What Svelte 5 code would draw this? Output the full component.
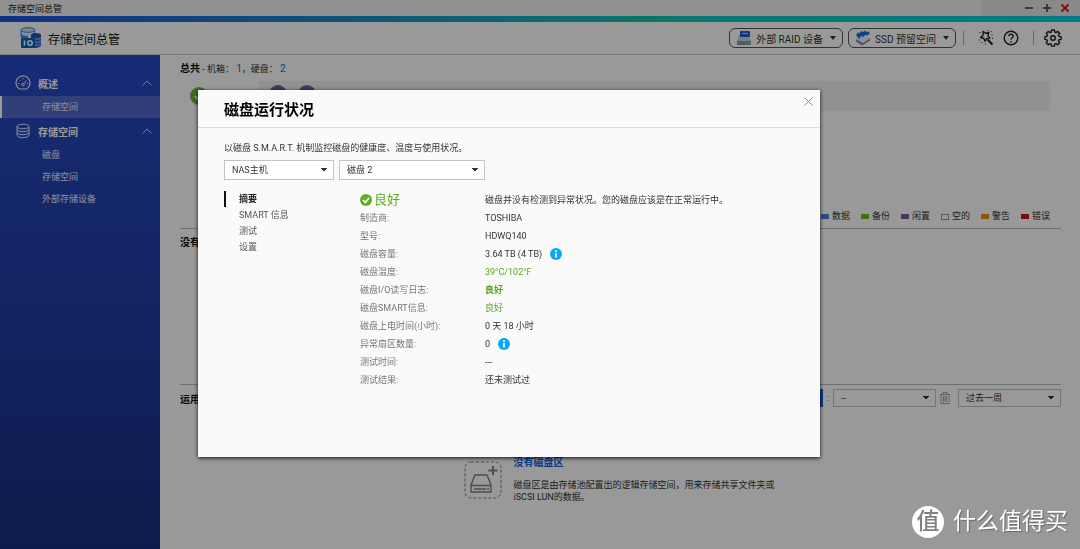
<script lang="ts">
	const nav = [
		{ title: "概述", icon: "gauge", items: ["存储空间"] },
		{ title: "存储空间", icon: "disks", items: ["磁盘", "存储空间", "外部存储设备"] },
	];

	const legend = [
		{ label: "数据", color: "#3f7fe8" },
		{ label: "备份", color: "#6fbf0c" },
		{ label: "闲置", color: "#7a5c94" },
		{ label: "空的", color: "" },
		{ label: "警告", color: "#f08a1c" },
		{ label: "错误", color: "#d0101c" },
	];

	const tabs = ["摘要", "SMART 信息", "测试", "设置"];

	const rows = [
		{ label: "制造商:", value: "TOSHIBA" },
		{ label: "型号:", value: "HDWQ140" },
		{ label: "磁盘容量:", value: "3.64 TB (4 TB)", info: true },
		{ label: "磁盘温度:", value: "39°C/102°F", good: true },
		{ label: "磁盘I/O读写日志:", value: "良好", good: true, bold: true },
		{ label: "磁盘SMART信息:", value: "良好", good: true },
		{ label: "磁盘上电时间(小时):", value: "0 天 18 小时" },
		{ label: "异常扇区数量:", value: "0", info: true },
		{ label: "测试时间:", value: "---" },
		{ label: "测试结果:", value: "还未测试过" },
	];

	let open = $state(true);
	let tab = $state("摘要");
	let host = $state("NAS主机");
	let disk = $state("磁盘 2");
	let period = $state("过去一周");
</script>

<div class="app">
	<div class="titlebar">
		<span>存储空间总管</span>
		<div class="titlebar__buttons">
			<button aria-label="最小化">
				<svg width="10" height="10" viewBox="0 0 10 10"><path d="M1 5h8" stroke="#5a606c" stroke-width="2" /></svg>
			</button>
			<button aria-label="最大化">
				<svg width="10" height="10" viewBox="0 0 10 10"><path d="M1 5h8M5 1v8" stroke="#5a606c" stroke-width="2" /></svg>
			</button>
			<button aria-label="关闭窗口">
				<svg width="10" height="10" viewBox="0 0 10 10"><path d="M1.500 1.500l7 7m0-7l-7 7" stroke="#e0141e" stroke-width="2" /></svg>
			</button>
		</div>
	</div>
	<div class="strip"></div>

	<header class="header">
		<svg class="header__logo" width="22" height="22" viewBox="0 0 22 22">
			<path d="M1 3v7h14V3z" fill="#e4effc" />
			<path d="M1 3v7M14.500 3v4" stroke="#3d8ee8" />
			<ellipse cx="8" cy="3" rx="7" ry="2.300" fill="#cfe3fb" stroke="#2f7fe0" />
			<path d="M1 6q1 3 7 3v3H1z" fill="#3d90ee" />
			<path d="M11 8h10v11q-2 2-6 2l-4-1z" fill="#2b5fd0" />
			<ellipse cx="16" cy="8" rx="5" ry="2" fill="#2050b8" />
			<path d="M14 12q5 1 7-1M14 15q5 1 7-1M14 18q5 1 7-1" fill="none" stroke="#9cc2f5" />
			<rect x="1" y="11" width="14" height="10" rx="1" fill="#0d62b8" />
			<path d="M4.500 13.500v5" stroke="#fff" stroke-width="1.600" />
			<circle cx="10" cy="16" r="2.200" fill="none" stroke="#fff" stroke-width="1.500" />
		</svg>
		<h1>存储空间总管</h1>
		<div class="header__tools">
			<button class="pill">
				<svg width="16" height="16" viewBox="0 0 16 16">
					<path d="M3 5L1 11h14l-2-6z" fill="#c9d3de" />
					<rect x="1" y="11" width="14" height="4" fill="#8a99a8" />
					<path d="M11 13h3" stroke="#5fd44a" />
					<rect x="4" y="1" width="10" height="6" rx="1" fill="#1f5fc8" />
					<path d="M6 3.500h6" stroke="#b9d4fa" />
				</svg>
				外部 RAID 设备
				<svg class="caret" width="6" height="4" viewBox="0 0 6 4"><path d="M0 0h6L3 4z" fill="currentColor" /></svg>
			</button>
			<button class="pill pill--ssd">
				<svg width="16" height="16" viewBox="0 0 16 16">
					<path d="M1 9l7 4 7-5v2.500L7 15.500l-6-4z" fill="#7f90a6" />
					<path d="M1 8.500L8 5l7 3-7 5z" fill="#e8f1fb" />
					<path d="M1 5l2-2.500 2 .5 1-2 2.500 1L10 .5l2 1.500 2.500-.5V4L12 5.500 10 5 8.500 7 6 6 4 9 2.500 7z" fill="#1a72e0" />
				</svg>
				SSD 预留空间
				<svg class="caret" width="6" height="4" viewBox="0 0 6 4"><path d="M0 0h6L3 4z" fill="currentColor" /></svg>
			</button>
			<i class="divider"></i>
			<button class="tool" aria-label="向导">
				<svg width="16" height="16" viewBox="0 0 16 16" fill="none" stroke="#222">
					<path d="M5.200 1.500L7.800 3.400l3-.9-.8 3.100 1.900 2.500-3.100.3L7 11.200 5.700 8.300l-3.200-.8 2.500-2z" stroke-width="1.400" stroke-linejoin="round" />
					<path d="M9.500 9.500l5 5" stroke-width="2.200" />
					<path d="M1.500 2.500h1M.8 10h1M3.500 12.500h1M7 14h1M12.500 1.500h1M13.500 5h1M14 8.500h1M9.500.6h1" />
				</svg>
			</button>
			<button class="tool" aria-label="帮助">
				<svg width="16" height="16" viewBox="0 0 16 16" fill="none" stroke="#222" stroke-width="1.400">
					<circle cx="8" cy="8" r="6.800" />
					<path d="M5.800 6.300Q5.900 4.300 8 4.300t2.200 1.900Q10.200 7.300 8.900 8 8 8.500 8 9.700" />
					<path d="M8 11v1.500" />
				</svg>
			</button>
			<i class="divider"></i>
			<button class="tool" aria-label="设置">
				<svg width="18" height="18" viewBox="0 0 18 18" fill="none" stroke="#222" stroke-width="1.400" stroke-linejoin="round">
					<path d="M7.600 1h2.800l.4 2.100 1.200.5 1.800-1.200 2 2-1.300 1.800.5 1.200 2 .3v2.700l-2 .4-.5 1.200 1.200 1.800-2 2-1.800-1.200-1.200.5-.3 2H7.600l-.4-2-1.200-.5-1.800 1.200-2-2L3.400 12l-.5-1.200-2-.4V7.700l2-.3.5-1.200-1.200-1.800 2-2L6 3.600l1.200-.5z" />
					<circle cx="9" cy="9" r="2.300" />
				</svg>
			</button>
		</div>
	</header>

	<div class="body">
		<nav class="side">
			{#each nav as group, g}
				<button class="side__group">
					{#if group.icon === "gauge"}
						<svg width="16" height="16" viewBox="0 0 16 16" fill="none" stroke="#e8edfb">
							<path d="M4.500 14A7 7 0 1 1 11.500 14z" stroke-width="1.200" />
							<circle cx="8" cy="9.500" r="1.300" />
							<path d="M9 8.500l2.500-3M3 8.500h1.300M4.500 4.800l.8.800M8 3v1.400M12 8.500h1.200" />
						</svg>
					{:else}
						<svg width="16" height="16" viewBox="0 0 16 16" fill="none" stroke="#e8edfb">
							<ellipse cx="8" cy="3.500" rx="6" ry="2.300" />
							<path d="M2 3.500v9M14 3.500v9M2 6.500q1 2.300 6 2.300t6-2.300M2 9.500q1 2.300 6 2.300t6-2.300M2 12.500q1 2.300 6 2.300t6-2.300" />
						</svg>
					{/if}
					{group.title}
					<svg class="side__arrow" width="10" height="6" viewBox="0 0 10 6"><path d="M.5 5.500L5 1l4.500 4.500" fill="none" stroke="#c0cbee" /></svg>
				</button>
				{#each group.items as item, i}
					<a class="side__item" class:side__item--on={g === 0 && i === 0} href="#{item}">{item}</a>
				{/each}
			{/each}
		</nav>

		<main class="main">
			<section class="overview">
				<p class="total"><b>总共</b> - 机箱： <a href="#enclosure">1</a>，硬盘： <a href="#disks">2</a></p>
				<div class="chassis">
					<svg width="18" height="18" viewBox="0 0 18 18">
						<circle cx="9" cy="9" r="9" fill="#65b52a" />
						<path d="M5 9l3 3.500L13 6" fill="none" stroke="#fff" stroke-width="2" />
					</svg>
					<div class="chassis__bays"><i></i><i></i></div>
				</div>
				<ul class="legend">
					{#each legend as l}
						<li><i style:background={l.color || "none"} class:empty={!l.color}></i>{l.label}</li>
					{/each}
				</ul>
			</section>

			<section class="pool"><h2>没有存储池</h2></section>

			<section class="usage">
				<div class="usage__bar">
					<h2>运用率</h2>
					<button class="usage__add">新增</button>
					<span>:</span>
					<select aria-label="对象"><option>--</option></select>
					<button class="trash" aria-label="删除">
						<svg width="10" height="12" viewBox="0 0 10 12" fill="none" stroke="#a0a0a0">
							<path d="M0 2.500h10M3 2V.5h4V2M1 2.500v9h8v-9M3.500 4v6M5 4v6M6.500 4v6" />
						</svg>
					</button>
					<select aria-label="时间范围" bind:value={period}><option>过去一周</option></select>
				</div>
				<div class="none">
					<svg width="38" height="38" viewBox="0 0 38 38" fill="none" stroke="#808080">
						<rect x="1" y="1" width="36" height="36" rx="6" stroke-dasharray="3 2" />
						<path d="M29 5v9M24.500 9.500h9" stroke-width="2" />
						<path d="M11 14h12l4 10v7H7v-7zM7 24.500h20M10 28h12M23 28h2" stroke-width="1.400" />
					</svg>
					<div>
						<a href="#volume">没有磁盘区</a>
						<p>磁盘区是由存储池配置出的逻辑存储空间，用来存储共享文件夹或iSCSI LUN的数据。</p>
					</div>
				</div>
			</section>
		</main>
	</div>

	{#if open}
		<div class="mask">
			<div class="dialog" role="dialog" aria-labelledby="dialog-title">
				<div class="dialog__head">
					<h2 id="dialog-title">磁盘运行状况</h2>
					<button aria-label="关闭" onclick={() => (open = false)}>
						<svg width="9" height="9" viewBox="0 0 9 9"><path d="M.5.5l8 8m0-8l-8 8" stroke="#8a8a8a" /></svg>
					</button>
				</div>
				<div class="dialog__body">
					<p>以磁盘 S.M.A.R.T. 机制监控磁盘的健康度、温度与使用状况。</p>
					<div class="selects">
						<select class="selects__host" aria-label="主机" bind:value={host}><option>NAS主机</option></select>
						<select class="selects__disk" aria-label="磁盘" bind:value={disk}><option>磁盘 1</option><option>磁盘 2</option></select>
					</div>
					<div class="detail">
						<div class="tabs">
							{#each tabs as t}
								<button class:on={tab === t} onclick={() => (tab = t)}>{t}</button>
							{/each}
						</div>
						<table>
							<tbody>
								<tr class="status">
									<th scope="row">
										<span>
											<svg width="12" height="12" viewBox="0 0 12 12">
												<circle cx="6" cy="6" r="6" fill="#62ad26" />
												<path d="M3 6l2.300 2.400L9 4" fill="none" stroke="#fff" stroke-width="1.700" />
											</svg>
											良好
										</span>
									</th>
									<td>磁盘并没有检测到异常状况。您的磁盘应该是在正常运行中。</td>
								</tr>
								{#each rows as r}
									<tr>
										<th scope="row">{r.label}</th>
										<td class:good={r.good} class:bold={r.bold}>
											<span>
												{r.value}
												{#if r.info}
													<svg width="12" height="12" viewBox="0 0 12 12">
														<circle cx="6" cy="6" r="6" fill="#0aa8f5" />
														<path d="M6 5v4.500M6 2.300v1.600" stroke="#fff" stroke-width="1.700" />
													</svg>
												{/if}
											</span>
										</td>
									</tr>
								{/each}
							</tbody>
						</table>
					</div>
				</div>
			</div>
		</div>
	{/if}

	<div class="mark"><b>值</b>什么值得买</div>
</div>

<style>
	:global(body) {
		font-family: Roboto, "Noto Sans CJK SC", sans-serif;
		font-size: 9px;
		color: #333;
	}

	button,
	select {
		font: inherit;
		color: inherit;
		padding: 0;
		border: 0;
		background: none;
	}

	button {
		cursor: pointer;
	}

	svg {
		display: block;
		flex-shrink: 0;
	}

	a {
		color: #1464e6;
		text-decoration: none;
	}

	h1,
	h2,
	p,
	ul {
		margin: 0;
		padding: 0;
	}

	select {
		height: 18px;
		padding: 0 20px 0 7px;
		border: 1px solid #c4c4c4;
		border-radius: 0;
		appearance: none;
		background: linear-gradient(to top right, transparent 50%, #333 50%) right 9px center / 3px 4px no-repeat,
			linear-gradient(to top left, transparent 50%, #333 50%) right 6px center / 3px 4px no-repeat;
	}

	.app {
		min-height: 100vh;
		display: flex;
		flex-direction: column;
		background: #fff;
	}

	.titlebar {
		height: 16px;
		padding: 0 10px 0 8px;
		display: flex;
		align-items: center;
		justify-content: space-between;
		background: linear-gradient(to right, #f2f2f2, #f0f0f0 calc(100% - 98px), #e4e4e4 calc(100% - 98px));
		color: #222;
	}

	.titlebar__buttons {
		display: flex;
		gap: 8px;
	}

	.strip {
		height: 6px;
		background: linear-gradient(to right, #1e50e0, #1c86c8 30%, #13c4b4 60%, #00cfe0);
	}

	.header {
		height: 32px;
		padding: 0 18px 0 20px;
		display: flex;
		align-items: center;
		border-bottom: 1px solid #ccc;
	}

	.header__logo {
		margin-right: 6px;
	}

	h1 {
		font-size: 12px;
		font-weight: 400;
		color: #111;
	}

	.header__tools {
		margin-left: auto;
		display: flex;
		align-items: center;
	}

	.pill {
		height: 20px;
		padding: 0 6px;
		display: flex;
		align-items: center;
		gap: 4px;
		border: 1px solid #555;
		border-radius: 6px;
		font-size: 10px;
	}

	.pill--ssd {
		margin-left: 5px;
	}

	.caret {
		margin-left: 3px;
	}

	.divider {
		width: 1px;
		height: 14px;
		margin: 0 14px 0 7px;
		background: #b0b0b0;
	}

	.tool + .tool {
		margin-left: 9px;
	}

	.tool + .divider {
		margin: 0 10px 0 14px;
	}

	.body {
		flex: 1;
		display: flex;
	}

	.side {
		width: 160px;
		flex-shrink: 0;
		box-sizing: border-box;
		padding-top: 15px;
		background: linear-gradient(#264ac4, #1e399c 60%, #16307f);
	}

	.side__group {
		width: 100%;
		height: 26px;
		padding: 0 8px 0 15px;
		display: flex;
		align-items: center;
		gap: 7px;
		font-size: 10px;
		font-weight: 700;
		color: #fff;
	}

	.side__arrow {
		margin-left: auto;
	}

	.side__item {
		display: block;
		padding-left: 42px;
		line-height: 22px;
		color: #e8edfb;
	}

	.side__item--on {
		padding-left: 40px;
		border-left: 2px solid #fff;
		background: #5069c8;
	}

	.main {
		flex: 1;
		min-width: 0;
		padding: 0 19px 0 20px;
	}

	.overview {
		height: 173px;
		display: flex;
		flex-direction: column;
		border-bottom: 1px solid #bbb;
	}

	.total {
		padding-top: 6px;
		line-height: 16px;
	}

	.total a {
		font-size: 10px;
	}

	.total b,
	.main h2 {
		font-size: 10px;
		font-weight: 700;
		color: #111;
	}

	.chassis {
		display: flex;
		align-items: center;
		gap: 51px;
		padding: 4px 11px 0 10px;
	}

	.chassis__bays {
		flex: 1;
		height: 26px;
		padding: 4px 10px 0;
		display: flex;
		gap: 11px;
		background: #f2f2f2;
	}

	.chassis__bays i {
		width: 18px;
		height: 18px;
		border-radius: 50%;
		background: #7a5c94;
	}

	.legend {
		margin-top: auto;
		padding: 0 11px 5px 0;
		display: flex;
		justify-content: flex-end;
		gap: 11px;
		list-style: none;
		line-height: 13px;
	}

	.legend li {
		display: flex;
		align-items: center;
		gap: 3px;
	}

	.legend i {
		width: 8px;
		height: 5px;
		box-sizing: border-box;
	}

	.legend .empty {
		height: 6px;
		border: 1px solid #999;
	}

	.pool {
		height: 150px;
		padding-top: 5px;
		border-bottom: 1px solid #bbb;
	}

	.usage__bar {
		padding-top: 4px;
		display: flex;
		align-items: center;
		gap: 4px;
	}

	.usage__add {
		margin-left: auto;
		width: 40px;
		height: 18px;
		background: #1a5fe0;
		color: #fff;
	}

	.usage__bar select {
		width: 103px;
	}

	.trash {
		margin-right: 4px;
	}

	.none {
		margin-top: 50px;
		display: flex;
		align-items: center;
		justify-content: center;
		gap: 12px;
	}

	.none div {
		width: 264px;
	}

	.none a {
		display: block;
		font-size: 10px;
		font-weight: 700;
		line-height: 12px;
	}

	.none p {
		margin-top: 10px;
		line-height: 12px;
	}

	.mask {
		position: fixed;
		inset: 0;
		display: flex;
		align-items: center;
		justify-content: center;
		padding: 0 62px 3px 0;
		background: rgba(0, 0, 0, 0.4);
	}

	.dialog {
		width: 100%;
		max-width: 622px;
		background: #fafafa;
		box-shadow: 0 1px 4px rgba(0, 0, 0, 0.9);
	}

	.dialog__head {
		height: 37px;
		padding: 0 7px 0 26px;
		display: flex;
		align-items: center;
		justify-content: space-between;
		border-bottom: 1px solid #ddd;
	}

	.dialog__head h2 {
		font-size: 15px;
		color: #000;
	}

	.dialog__head button {
		align-self: flex-start;
		margin-top: 7px;
	}

	.dialog__body {
		padding: 12px 26px 68px;
		line-height: 16px;
	}

	.selects {
		display: flex;
		gap: 5px;
		margin-top: 4px;
	}

	.selects select {
		height: 20px;
		background-color: #fff;
	}

	.selects__host {
		width: 110px;
	}

	.selects__disk {
		width: 146px;
	}

	.detail {
		display: flex;
		margin-top: 11px;
	}

	.tabs {
		width: 136px;
		display: flex;
		flex-direction: column;
	}

	.tabs button {
		line-height: 16px;
		padding-left: 15px;
		text-align: left;
		color: #555;
	}

	.tabs .on {
		padding-left: 13px;
		border-left: 2px solid #111;
		font-weight: 700;
		color: #222;
	}

	table {
		flex: 1;
		border-collapse: collapse;
	}

	th,
	td {
		height: 18px;
		padding: 0;
		text-align: left;
		font-weight: 400;
	}

	th {
		width: 125px;
		color: #777;
	}

	tr span {
		display: flex;
		align-items: center;
		gap: 8px;
	}

	.status th {
		font-size: 13px;
		color: #5db01e;
	}

	.status span {
		gap: 2px;
	}

	.good {
		color: #56a818;
	}

	.bold {
		font-weight: 700;
	}

	.mark {
		position: fixed;
		right: 12px;
		bottom: 11px;
		display: flex;
		align-items: center;
		gap: 9px;
		font-size: 23px;
		line-height: 32px;
		color: #fff;
		text-shadow: 1px 1px 1px #666;
	}

	.mark b {
		width: 32px;
		height: 32px;
		border-radius: 50%;
		background: #fff;
		color: #808080;
		text-align: center;
		font-weight: 500;
		text-shadow: none;
	}
</style>
